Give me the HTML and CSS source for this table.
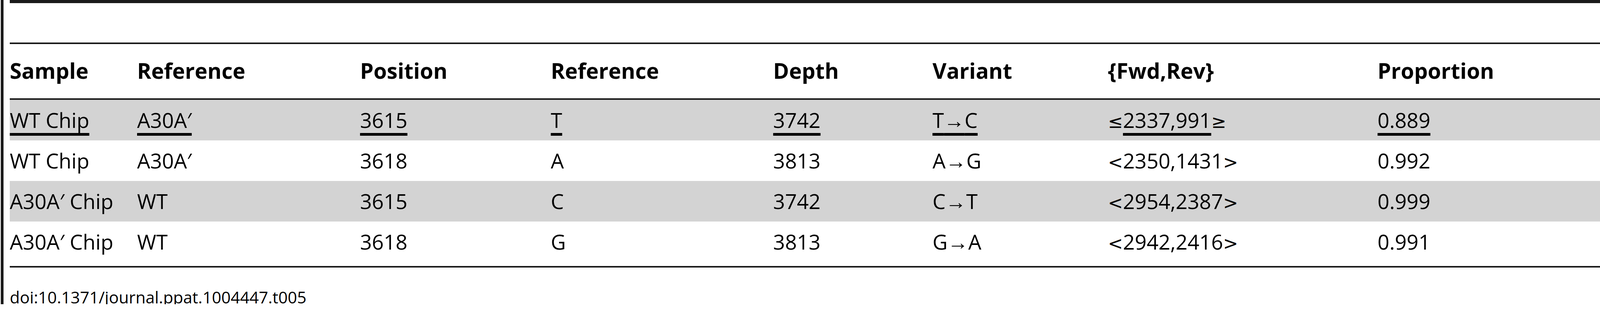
FILE: index.html
```html
<!DOCTYPE html>
<html lang="en">
<head>
<meta charset="utf-8">
<title>Table 5</title>
<link rel="stylesheet" href="styles.css">
</head>
<body>
<div class="frame">
  <table class="data">
    <colgroup>
      <col class="c1"><col class="c2"><col class="c3"><col class="c4">
      <col class="c5"><col class="c6"><col class="c7"><col class="c8">
    </colgroup>
    <thead>
      <tr class="blank"><th colspan="8"></th></tr>
      <tr class="head">
        <th>Sample</th>
        <th>Reference</th>
        <th>Position</th>
        <th>Reference</th>
        <th>Depth</th>
        <th>Variant</th>
        <th>{Fwd,Rev}</th>
        <th>Proportion</th>
      </tr>
    </thead>
    <tbody>
      <tr class="shade">
        <td><span class="ul">WT Chip</span></td>
        <td><span class="ul">A30A′</span></td>
        <td><span class="ul">3615</span></td>
        <td><span class="ul">T</span></td>
        <td><span class="ul">3742</span></td>
        <td><span class="ul">T<span class="arrow">→</span>C</span></td>
        <td><span class="angle">≤</span><span class="ul">2337,991</span><span class="angle">≥</span></td>
        <td><span class="ul">0.889</span></td>
      </tr>
      <tr>
        <td>WT Chip</td>
        <td>A30A′</td>
        <td>3618</td>
        <td>A</td>
        <td>3813</td>
        <td>A<span class="arrow">→</span>G</td>
        <td><span class="angle">&lt;</span>2350,1431<span class="angle">&gt;</span></td>
        <td>0.992</td>
      </tr>
      <tr class="shade">
        <td>A30A′ Chip</td>
        <td>WT</td>
        <td>3615</td>
        <td>C</td>
        <td>3742</td>
        <td>C<span class="arrow">→</span>T</td>
        <td><span class="angle">&lt;</span>2954,2387<span class="angle">&gt;</span></td>
        <td>0.999</td>
      </tr>
      <tr class="last">
        <td>A30A′ Chip</td>
        <td>WT</td>
        <td>3618</td>
        <td>G</td>
        <td>3813</td>
        <td>G<span class="arrow">→</span>A</td>
        <td><span class="angle">&lt;</span>2942,2416<span class="angle">&gt;</span></td>
        <td>0.991</td>
      </tr>
    </tbody>
  </table>
  <p class="doi">doi:10.1371/journal.ppat.1004447.t005</p>
</div>
</body>
</html>
```
FILE: styles.css
```css
html, body {
  margin: 0;
  padding: 0;
  background: #ffffff;
}

body {
  font-family: "Open Sans", "Noto Sans", "Liberation Sans", sans-serif;
  color: #000000;
}

.frame {
  margin-left: 2px;
  border-left: 7px solid #1a1a1a;
  padding-left: 16px;
}

.data {
  width: 100%;
  table-layout: fixed;
  border-collapse: separate;
  border-spacing: 0;
}

.c1 { width: 8.007%; }
.c2 { width: 14.021%; }
.c3 { width: 11.993%; }
.c4 { width: 13.986%; }
.c5 { width: 10.018%; }
.c6 { width: 11.032%; }
.c7 { width: 16.957%; }
.c8 { width: 13.986%; }

.data th,
.data td {
  text-align: left;
  white-space: nowrap;
  padding: 0;
  vertical-align: top;
}

.blank th {
  height: 101px;
  border-top: 8px solid #1a1a1a;
  border-bottom: 4px solid #1a1a1a;
}

.head th {
  font-weight: 700;
  font-size: 55px;
  line-height: 72px;
  padding-top: 32px;
  padding-bottom: 35px;
  border-bottom: 4px solid #1a1a1a;
}

.data td {
  font-size: 53px;
  line-height: 72px;
  padding-top: 16px;
  padding-bottom: 16px;
}

.shade td {
  background: #d3d3d3;
}

.last td {
  padding-bottom: 26px;
  border-bottom: 4px solid #1a1a1a;
}

.ul {
  text-decoration: underline;
  text-decoration-thickness: 7px;
  text-underline-offset: 13px;
  text-decoration-skip-ink: none;
}

.arrow {
  font-family: "Liberation Sans", "DejaVu Sans", sans-serif;
  line-height: 1;
}

.angle {
  font-family: "DejaVu Sans", "Liberation Sans", sans-serif;
  font-size: 46px;
  line-height: 1;
}

.doi {
  margin: 58px 0 0 0;
  font-size: 42px;
  line-height: 36px;
}
```
